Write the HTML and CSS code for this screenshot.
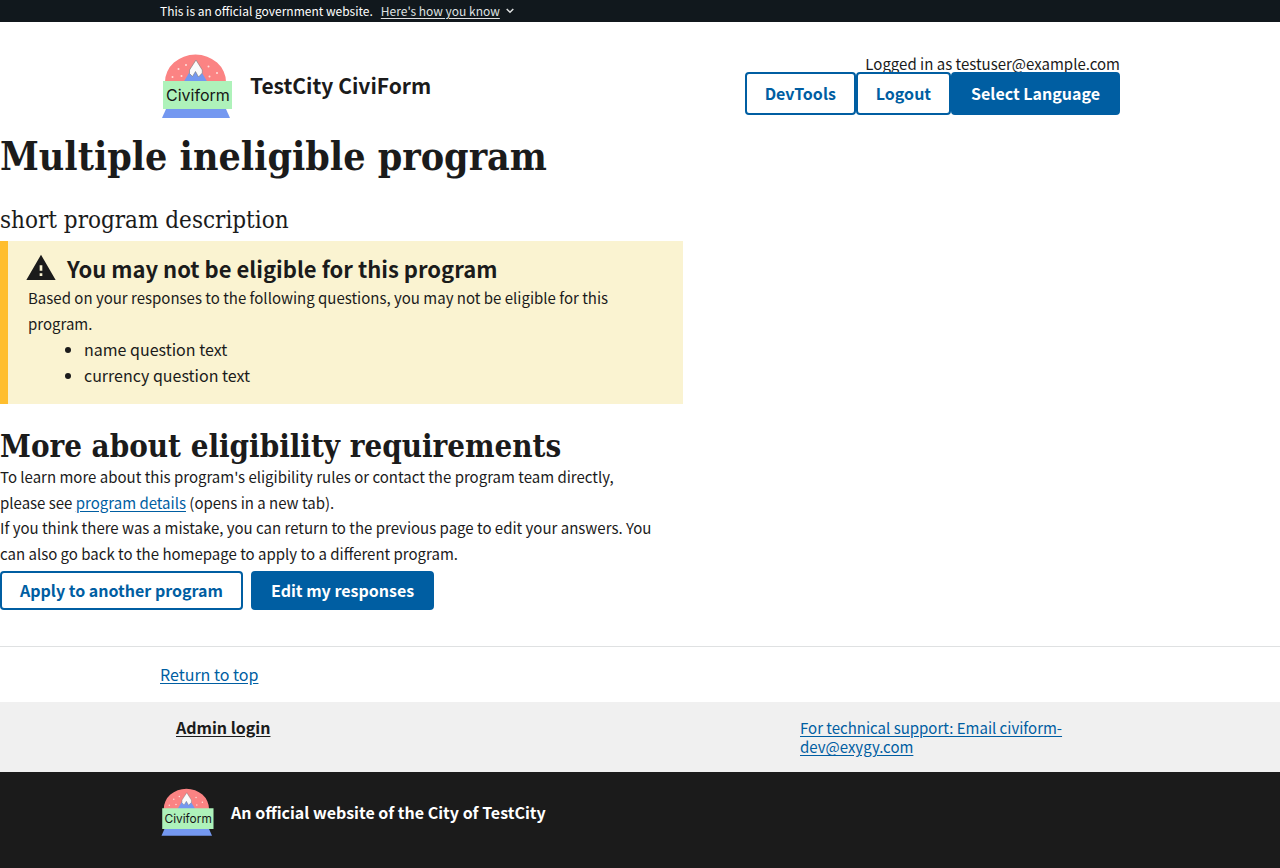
FILE: index.html
```html
<!DOCTYPE html>
<html lang="en">
<head>
<meta charset="utf-8">
<meta name="viewport" content="width=device-width, initial-scale=1">
<title>Multiple ineligible program</title>
<link rel="stylesheet" href="styles.css">
</head>
<body>
<svg class="sprite" aria-hidden="true">
  <symbol id="civiform-logo" viewBox="0 0 74 68">
    <path d="M5 30a30 27 0 0 1 61 0z" fill="#fb8383"/>
    <path d="M23 31L35.500 10 48 31z" fill="#7498f0"/>
    <path d="M36 8L29.500 18v3.500l3 3 3-5 3 5.500 3.800-4v-3z" fill="#fafafa" stroke="#777" stroke-width=".6"/>
    <g fill="#fde0dc">
      <circle cx="12.500" cy="25" r="1"/><circle cx="18.500" cy="17" r="1"/><circle cx="21.500" cy="24" r="1"/><circle cx="26" cy="13" r="1"/>
      <circle cx="48.500" cy="14.500" r="1"/><circle cx="57" cy="21" r="1"/><circle cx="49.500" cy="24.500" r="1"/>
    </g>
    <path d="M3 29h69v28H3z" fill="#aef2ba"/>
    <path d="M6 57h60l4 9H2z" fill="#7498f0"/>
    <text x="6" y="49" class="logo-word">Civiform</text>
  </symbol>
</svg>
<section class="banner" aria-label="Official government website">
  <div class="container banner-row">
    <span>This is an official government website.</span>
    <button class="banner-button" type="button"><span class="banner-link">Here's how you know</span>
      <svg width="8" height="6" viewBox="0 0 8 6" aria-hidden="true"><path d="M.7 1L4 4.300 7.300 1" fill="none" stroke="currentColor" stroke-width="1.500"/></svg>
    </button>
  </div>
</section>
<header class="container header">
  <a class="brand" href="#">
    <svg class="brand-logo" role="img" aria-label="Civiform logo"><use href="#civiform-logo"/></svg>
    <span>TestCity CiviForm</span>
  </a>
  <div class="account">
    <span>Logged in as testuser@example.com</span>
    <nav class="account-nav">
      <button class="button" type="button">DevTools</button>
      <button class="button" type="button">Logout</button>
      <button class="button button-solid" type="button">Select Language</button>
    </nav>
  </div>
</header>
<main class="main">
  <h1>Multiple ineligible program</h1>
  <p class="intro">short program description</p>
  <section class="alert">
    <h2 class="alert-title">
      <svg width="32" height="32" viewBox="0 0 24 24" aria-hidden="true"><path d="M1 21h22L12 2 1 21zm12-3h-2v-2h2v2zm0-4h-2v-4h2v4z" fill="currentColor"/></svg>
      You may not be eligible for this program
    </h2>
    <p>Based on your responses to the following questions, you may not be eligible for this program.</p>
    <ul>
      <li>name question text</li>
      <li>currency question text</li>
    </ul>
  </section>
  <h2 class="section-title">More about eligibility requirements</h2>
  <p>To learn more about this program's eligibility rules or contact the program team directly, please see <a href="#">program details</a> (opens in a new tab).</p>
  <p>If you think there was a mistake, you can return to the previous page to edit your answers. You can also go back to the homepage to apply to a different program.</p>
  <div class="actions">
    <button class="button button-short" type="button">Apply to another program</button>
    <button class="button button-short button-solid" type="button">Edit my responses</button>
  </div>
</main>
<footer class="footer">
  <div class="container return"><a href="#">Return to top</a></div>
  <div class="footer-links">
    <div class="container footer-grid">
      <a class="admin" href="#">Admin login</a>
      <a href="#">For technical support: Email civiform-dev@exygy.com</a>
    </div>
  </div>
  <div class="footer-identity">
    <div class="container identity-row">
      <svg class="identity-logo" role="img" aria-label="Civiform logo"><use href="#civiform-logo"/></svg>
      <span>An official website of the City of TestCity</span>
    </div>
  </div>
</footer>
</body>
</html>
```
FILE: styles.css
```css
* { box-sizing: border-box; }
body {
  margin: 0;
  color: #1b1b1b;
  background: #fff;
  font: 15px/1.7 "Noto Sans CJK SC", "Open Sans", sans-serif;
}
h1, h2, p, ul { margin: 0; }
a { color: #005ea2; text-underline-offset: 2px; }
button { font: inherit; cursor: pointer; }
.sprite { position: absolute; width: 0; height: 0; }
.logo-word { font: 16px Inter, sans-serif; fill: #171717; }
.container { max-width: 1024px; margin: 0 auto; padding: 0 32px; }

.banner { color: #fff; background: #11181d; font-size: 12px; line-height: 22px; }
.banner-row { display: flex; gap: 8px; }
.banner-button {
  display: flex; align-items: center; gap: 6px;
  padding: 0; border: 0; background: none; color: #dfe1e2;
}
.banner-link { text-decoration: underline; text-underline-offset: 2px; }

.header { display: flex; justify-content: space-between; align-items: flex-start; padding-top: 30px; }
.brand {
  display: flex; align-items: center; gap: 16px;
  color: #1b1b1b; font-size: 21px; font-weight: 700; text-decoration: none;
}
.brand-logo { width: 74px; height: 68px; }
.account { display: flex; flex-direction: column; align-items: flex-end; line-height: 24px; }
.account-nav { display: flex; position: relative; margin-top: -4px; }
.button {
  padding: 10px 18px;
  border: 2px solid #005ea2; border-radius: 4px;
  background: #fff; color: #005ea2;
  font-size: 16px; font-weight: 700; line-height: 19px;
}
.button-solid { background: #005ea2; color: #fff; }
.button-short { padding-top: 8px; padding-bottom: 8px; }

.main { padding: 10px 0 36px; }
.main p { max-width: 660px; }
.alert { max-width: 683px; }
h1, .section-title, .main .intro { font-family: "DejaVu Serif Condensed", "DejaVu Serif", serif; font-stretch: condensed; }
h1 { font-size: 39px; line-height: 52px; }
.main .intro { margin-top: 20px; font-size: 24px; line-height: 36px; }
.alert { margin-top: 3px; padding: 11px 20px 16px; border-left: 8px solid #ffbe2e; background: #faf3d1; }
.alert-title { display: flex; align-items: center; gap: 10px; margin-left: -3px; font-size: 22px; line-height: 32px; }
.alert p { margin-top: 1px; }
.alert ul { padding-left: 56px; font-size: 16px; line-height: 26px; }
.section-title { margin-top: 24px; font-size: 31px; line-height: 36px; }
.actions { display: flex; gap: 8px; margin-top: 5px; }

.footer { border-top: 1px solid #dfe1e2; }
.return { padding-top: 14px; padding-bottom: 14px; font-size: 16px; }
.footer-links { background: #f0f0f0; }
.footer-grid {
  display: grid; grid-template-columns: 2fr 1fr; gap: 16px;
  padding: 16px 48px; line-height: 19px;
}
.footer-grid a { justify-self: start; }
.admin { color: #1b1b1b; font-size: 16px; font-weight: 700; }
.footer-identity { padding: 14px 0 30px; color: #fff; background: #1b1b1b; font-size: 16px; font-weight: 700; }
.identity-row { display: flex; align-items: center; gap: 16px; }
.identity-logo { width: 55px; height: 52px; }
```
